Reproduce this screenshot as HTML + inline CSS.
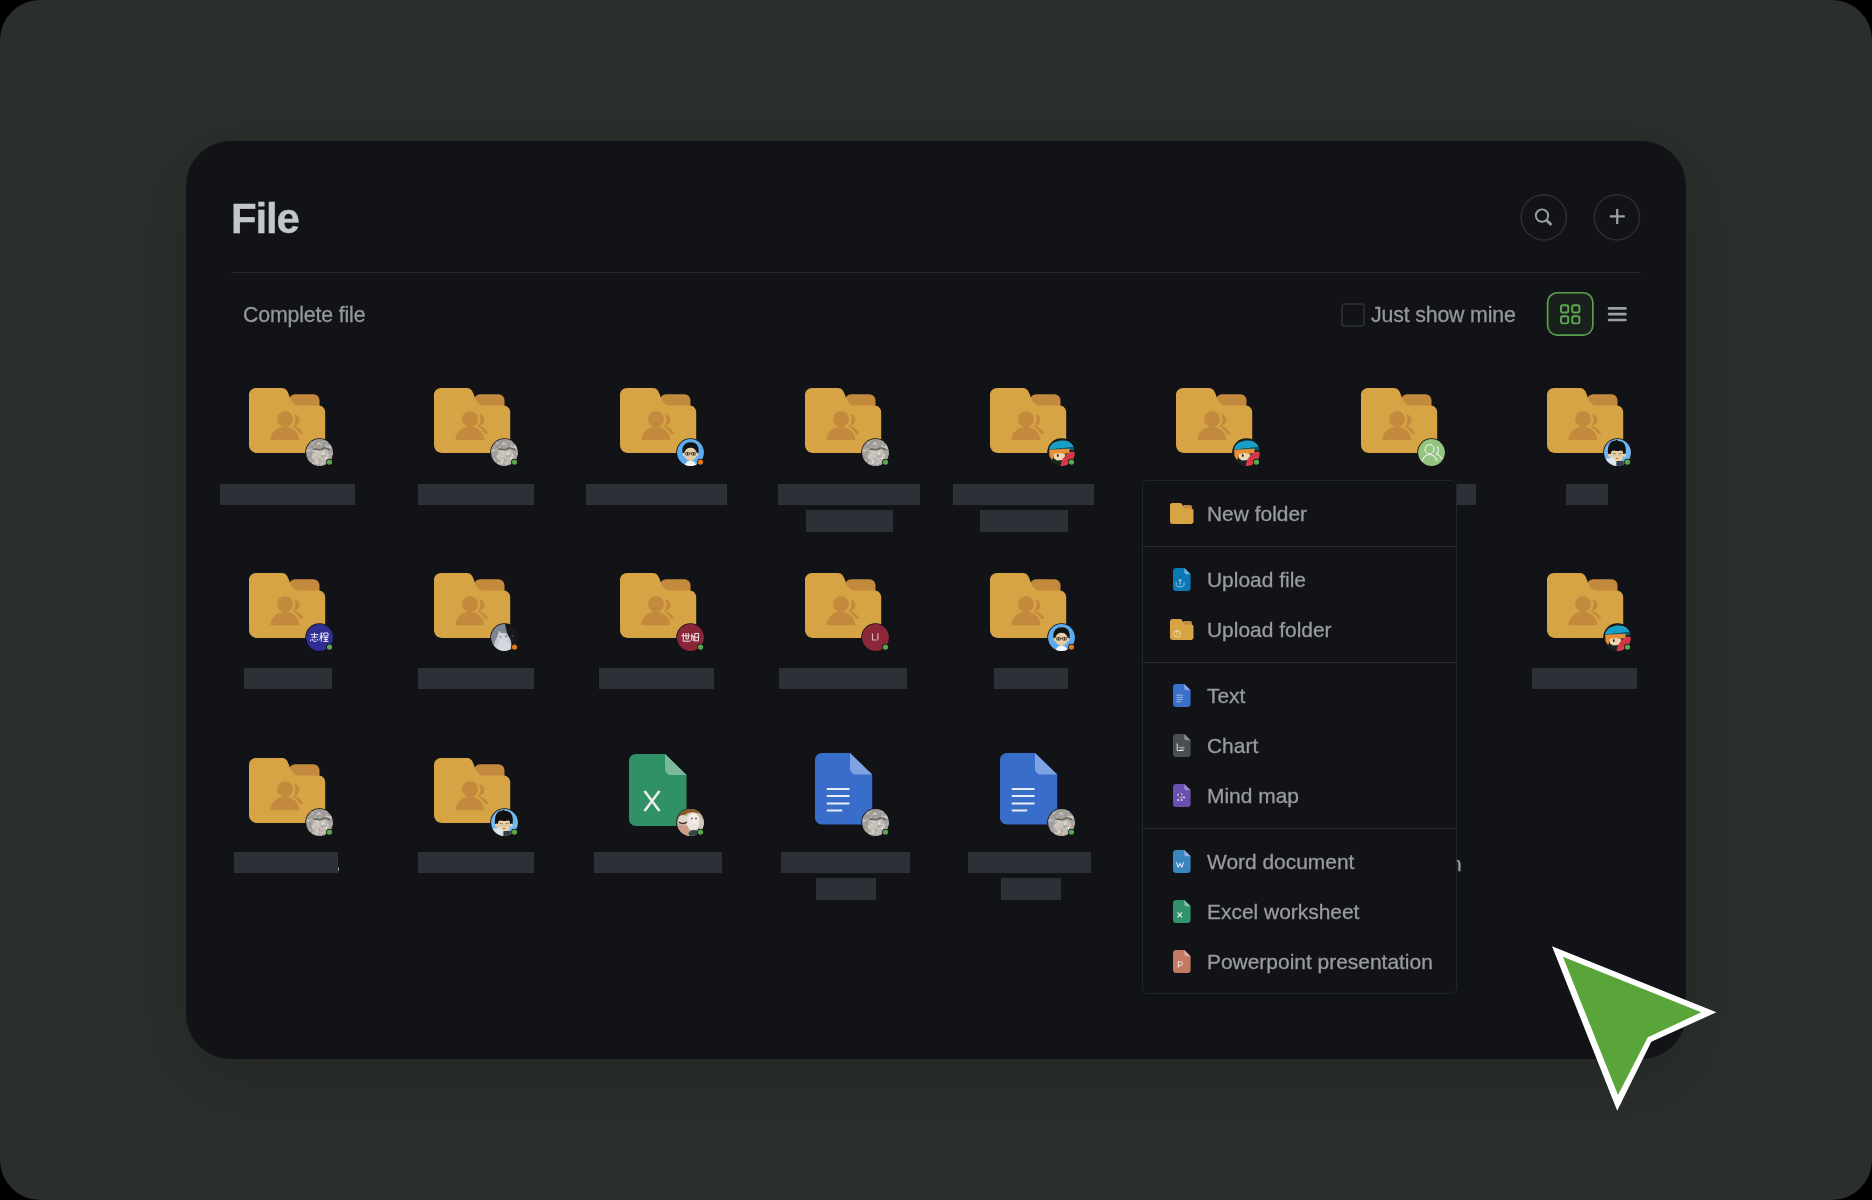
<!DOCTYPE html>
<html><head><meta charset="utf-8"><style>
html,body{margin:0;padding:0;background:#000;width:1872px;height:1200px;overflow:hidden}
body{position:relative;font-family:"Liberation Sans",sans-serif}
.ab{position:absolute}
.gs{will-change:transform;-webkit-text-stroke:0.3px currentColor}
.bar{height:21.5px;background:#2d3037}
.mt{font-size:20.95px;line-height:30px;color:#999ba2;white-space:nowrap}
</style></head><body>
<svg width="0" height="0" style="position:absolute"><defs>
<filter id="mbd" x="0" y="0" width="1" height="1"><feTurbulence type="turbulence" baseFrequency="0.2" numOctaves="2" seed="7"/><feColorMatrix type="matrix" values="0 0 0 0 0.35  0 0 0 0 0.35  0 0 0 0 0.36  2.6 0 0 0 -0.5"/></filter>
<filter id="mbl" x="0" y="0" width="1" height="1"><feTurbulence type="fractalNoise" baseFrequency="0.3" numOctaves="3" seed="2"/><feColorMatrix type="matrix" values="0 0 0 0 0.86  0 0 0 0 0.84  0 0 0 0 0.8  0 2.2 0 0 -1.0"/></filter>
<filter id="blur1"><feGaussianBlur stdDeviation="1.5"/></filter>
<filter id="blur05"><feGaussianBlur stdDeviation="0.5"/></filter>
</defs></svg>
<div class="ab" style="left:0;top:0;width:1872px;height:1200px;border-radius:40px;background:#2b2f2b"></div>
<div class="ab" style="left:186px;top:141px;width:1500px;height:918px;border-radius:45px;background:#121317;box-shadow:0 20px 70px rgba(0,0,0,0.17)"></div>
<div class="ab gs" style="left:231.2px;top:190.6px;font-size:42px;letter-spacing:-1.2px;font-weight:bold;color:#c4c6cd;line-height:56px">File</div>
<div class="ab" style="left:231px;top:271.5px;width:1410px;height:1px;background:#24262b"></div>
<svg class="ab" style="left:1514px;top:187px" width="60" height="60" viewBox="0 0 60 60"><circle cx="29.8" cy="30.3" r="22.6" stroke="#2c2e33" stroke-width="1.5" fill="none"/></svg>
<svg class="ab" style="left:1587px;top:187px" width="60" height="60" viewBox="0 0 60 60"><circle cx="30" cy="30.3" r="22.6" stroke="#2c2e33" stroke-width="1.5" fill="none"/></svg>
<svg class="ab" style="left:1530px;top:203px" width="28" height="28" viewBox="0 0 28 28"><circle cx="12" cy="12.6" r="6.2" stroke="#9c9fa6" stroke-width="1.9" fill="none"/><path d="M16.6 17.3 L21.4 22" stroke="#9c9fa6" stroke-width="2.6"/></svg>
<svg class="ab" style="left:1603px;top:203px" width="28" height="28" viewBox="0 0 28 28"><path d="M6.8 13.4 H21.8 M14.2 6 V21" stroke="#9c9fa6" stroke-width="2.2"/></svg>
<div class="ab gs" style="left:242.5px;top:299.9px;font-size:21.3px;letter-spacing:-0.15px;line-height:30px;color:#94979e;white-space:nowrap">Complete file</div>
<div class="ab" style="left:1341.3px;top:303px;width:19.5px;height:19.5px;border:2px solid #272a30;border-radius:3.5px"></div>
<div class="ab gs" style="left:1370.8px;top:299.9px;font-size:21.3px;letter-spacing:-0.15px;line-height:30px;color:#94979e;white-space:nowrap">Just show mine</div>
<svg class="ab" style="left:1540px;top:285px" width="60" height="60" viewBox="0 0 60 60"><rect x="7.65" y="7.75" width="45.2" height="42.3" rx="9.5" fill="#1a201c" stroke="#5aa04c" stroke-width="1.7"/></svg>
<svg class="ab" style="left:1556px;top:300px" width="30" height="30" viewBox="0 0 30 30"><g stroke="#5fa852" stroke-width="1.9" fill="none"><rect x="5" y="5.3" width="7.2" height="7.2" rx="1.8"/><rect x="16.2" y="5.3" width="7.2" height="7.2" rx="1.8"/><rect x="5" y="16.2" width="7.2" height="7.2" rx="1.8"/><rect x="16.2" y="16.2" width="7.2" height="7.2" rx="1.8"/></g></svg>
<svg class="ab" style="left:1604px;top:300px" width="26" height="26" viewBox="0 0 26 26"><path d="M5 8.4 H21.5 M5 14.1 H21.5 M5 20 H21.5" stroke="#9c9fa6" stroke-width="2.6" stroke-linecap="round"/></svg>
<svg class="ab" style="left:249.0px;top:388.0px" width="77" height="66" viewBox="0 0 77 66">
<rect x="40" y="6.3" width="30.5" height="20" rx="6" fill="#c38a3e"/>
<path d="M7 0 H33 C37 0 38.5 3 40 7 C41.5 12 44 17.6 50 17.6 H69.5 C73.3 17.6 76.2 20.5 76.2 24.3 V57 C76.2 61.4 72.6 65 68.2 65 H8 C3.6 65 0 61.4 0 57 V7 C0 3.1 3.1 0 7 0 Z" fill="#d6a444"/>
<clipPath id="fc1"><rect x="0" y="0" width="77" height="46"/></clipPath>
<circle cx="44.7" cy="31.8" r="5.8" fill="#c38a3e"/>
<ellipse cx="42.5" cy="53.5" rx="13.5" ry="16" fill="#c38a3e" clip-path="url(#fc1)"/>
<circle cx="36" cy="31.2" r="10.6" fill="#d6a444"/>
<path d="M19.4 52.2 A16.45 15.5 0 0 1 52.3 52.2 Z" fill="#d6a444"/>
<path d="M21.4 52.2 A14.45 13.5 0 0 1 50.3 52.2 Z" fill="#c38a3e"/>
<circle cx="36" cy="31.2" r="8" fill="#c38a3e"/>
</svg>
<svg class="ab" style="left:304.1px;top:436.7px" width="31" height="31" viewBox="-2 -2 31 31">
<circle cx="13.5" cy="13.5" r="14.3" fill="#121317"/>
<clipPath id="cmarble319452"><circle cx="13.5" cy="13.5" r="13.4"/></clipPath>
<g clip-path="url(#cmarble319452)"><rect width="27" height="27" fill="#9b9792"/><ellipse cx="15" cy="17.5" rx="9" ry="8" fill="#c7c0b5" filter="url(#blur1)"/><rect width="27" height="27" filter="url(#mbl)"/><rect width="27" height="27" filter="url(#mbd)"/><path d="M7 10.5 C10 9 13 12 16 10 C19 8 22 9.5 24 11" stroke="#55534f" stroke-width="1.6" fill="none" opacity="0.8" filter="url(#blur05)"/></g><circle cx="23.5" cy="23.1" r="3.4" fill="#121317"/><circle cx="23.5" cy="23.1" r="2.6" fill="#5aa84d"/>
</svg>
<svg class="ab" style="left:434.3px;top:388.0px" width="77" height="66" viewBox="0 0 77 66">
<rect x="40" y="6.3" width="30.5" height="20" rx="6" fill="#c38a3e"/>
<path d="M7 0 H33 C37 0 38.5 3 40 7 C41.5 12 44 17.6 50 17.6 H69.5 C73.3 17.6 76.2 20.5 76.2 24.3 V57 C76.2 61.4 72.6 65 68.2 65 H8 C3.6 65 0 61.4 0 57 V7 C0 3.1 3.1 0 7 0 Z" fill="#d6a444"/>
<clipPath id="fc2"><rect x="0" y="0" width="77" height="46"/></clipPath>
<circle cx="44.7" cy="31.8" r="5.8" fill="#c38a3e"/>
<ellipse cx="42.5" cy="53.5" rx="13.5" ry="16" fill="#c38a3e" clip-path="url(#fc2)"/>
<circle cx="36" cy="31.2" r="10.6" fill="#d6a444"/>
<path d="M19.4 52.2 A16.45 15.5 0 0 1 52.3 52.2 Z" fill="#d6a444"/>
<path d="M21.4 52.2 A14.45 13.5 0 0 1 50.3 52.2 Z" fill="#c38a3e"/>
<circle cx="36" cy="31.2" r="8" fill="#c38a3e"/>
</svg>
<svg class="ab" style="left:489.4px;top:436.7px" width="31" height="31" viewBox="-2 -2 31 31">
<circle cx="13.5" cy="13.5" r="14.3" fill="#121317"/>
<clipPath id="cmarble504452"><circle cx="13.5" cy="13.5" r="13.4"/></clipPath>
<g clip-path="url(#cmarble504452)"><rect width="27" height="27" fill="#9b9792"/><ellipse cx="15" cy="17.5" rx="9" ry="8" fill="#c7c0b5" filter="url(#blur1)"/><rect width="27" height="27" filter="url(#mbl)"/><rect width="27" height="27" filter="url(#mbd)"/><path d="M7 10.5 C10 9 13 12 16 10 C19 8 22 9.5 24 11" stroke="#55534f" stroke-width="1.6" fill="none" opacity="0.8" filter="url(#blur05)"/></g><circle cx="23.5" cy="23.1" r="3.4" fill="#121317"/><circle cx="23.5" cy="23.1" r="2.6" fill="#5aa84d"/>
</svg>
<svg class="ab" style="left:619.7px;top:388.0px" width="77" height="66" viewBox="0 0 77 66">
<rect x="40" y="6.3" width="30.5" height="20" rx="6" fill="#c38a3e"/>
<path d="M7 0 H33 C37 0 38.5 3 40 7 C41.5 12 44 17.6 50 17.6 H69.5 C73.3 17.6 76.2 20.5 76.2 24.3 V57 C76.2 61.4 72.6 65 68.2 65 H8 C3.6 65 0 61.4 0 57 V7 C0 3.1 3.1 0 7 0 Z" fill="#d6a444"/>
<clipPath id="fc3"><rect x="0" y="0" width="77" height="46"/></clipPath>
<circle cx="44.7" cy="31.8" r="5.8" fill="#c38a3e"/>
<ellipse cx="42.5" cy="53.5" rx="13.5" ry="16" fill="#c38a3e" clip-path="url(#fc3)"/>
<circle cx="36" cy="31.2" r="10.6" fill="#d6a444"/>
<path d="M19.4 52.2 A16.45 15.5 0 0 1 52.3 52.2 Z" fill="#d6a444"/>
<path d="M21.4 52.2 A14.45 13.5 0 0 1 50.3 52.2 Z" fill="#c38a3e"/>
<circle cx="36" cy="31.2" r="8" fill="#c38a3e"/>
</svg>
<svg class="ab" style="left:674.8px;top:436.7px" width="31" height="31" viewBox="-2 -2 31 31">
<circle cx="13.5" cy="13.5" r="14.3" fill="#121317"/>
<clipPath id="cguy690452"><circle cx="13.5" cy="13.5" r="13.4"/></clipPath>
<g clip-path="url(#cguy690452)"><rect width="27" height="27" fill="#5eacf0"/><path d="M5.5 14 C4.5 6 9 3 13.5 3.2 C18.5 3 22.5 6 21.5 14 Z" fill="#111214"/><ellipse cx="13.5" cy="15.2" rx="6.3" ry="6.6" fill="#e6cda8"/><path d="M7.2 12.5 C8 9 11 8.6 13.5 8.6 C16 8.6 19 9 19.8 12.5 L19.8 10 C18.5 7 15.5 6.5 13.5 6.5 C11.5 6.5 8.5 7 7.2 10 Z" fill="#111214"/><ellipse cx="6.9" cy="15.5" rx="1.2" ry="1.8" fill="#e6cda8"/><ellipse cx="20.1" cy="15.5" rx="1.2" ry="1.8" fill="#e6cda8"/><g stroke="#3a3028" stroke-width="0.8" fill="none"><rect x="8.5" y="13.5" width="4" height="2.6" rx="0.8"/><rect x="14.5" y="13.5" width="4" height="2.6" rx="0.8"/><path d="M12.5 14.3 H14.5"/></g><circle cx="10.5" cy="14.9" r="0.8" fill="#111"/><circle cx="16.5" cy="14.9" r="0.8" fill="#111"/><path d="M7.5 27 C8.5 23 11 21.8 13.5 21.8 C16 21.8 18.5 23 19.5 27 Z" fill="#f6f6f6"/></g><circle cx="23.5" cy="23.1" r="3.4" fill="#121317"/><circle cx="23.5" cy="23.1" r="2.6" fill="#e07a1f"/>
</svg>
<svg class="ab" style="left:805.1px;top:388.0px" width="77" height="66" viewBox="0 0 77 66">
<rect x="40" y="6.3" width="30.5" height="20" rx="6" fill="#c38a3e"/>
<path d="M7 0 H33 C37 0 38.5 3 40 7 C41.5 12 44 17.6 50 17.6 H69.5 C73.3 17.6 76.2 20.5 76.2 24.3 V57 C76.2 61.4 72.6 65 68.2 65 H8 C3.6 65 0 61.4 0 57 V7 C0 3.1 3.1 0 7 0 Z" fill="#d6a444"/>
<clipPath id="fc4"><rect x="0" y="0" width="77" height="46"/></clipPath>
<circle cx="44.7" cy="31.8" r="5.8" fill="#c38a3e"/>
<ellipse cx="42.5" cy="53.5" rx="13.5" ry="16" fill="#c38a3e" clip-path="url(#fc4)"/>
<circle cx="36" cy="31.2" r="10.6" fill="#d6a444"/>
<path d="M19.4 52.2 A16.45 15.5 0 0 1 52.3 52.2 Z" fill="#d6a444"/>
<path d="M21.4 52.2 A14.45 13.5 0 0 1 50.3 52.2 Z" fill="#c38a3e"/>
<circle cx="36" cy="31.2" r="8" fill="#c38a3e"/>
</svg>
<svg class="ab" style="left:860.2px;top:436.7px" width="31" height="31" viewBox="-2 -2 31 31">
<circle cx="13.5" cy="13.5" r="14.3" fill="#121317"/>
<clipPath id="cmarble875452"><circle cx="13.5" cy="13.5" r="13.4"/></clipPath>
<g clip-path="url(#cmarble875452)"><rect width="27" height="27" fill="#9b9792"/><ellipse cx="15" cy="17.5" rx="9" ry="8" fill="#c7c0b5" filter="url(#blur1)"/><rect width="27" height="27" filter="url(#mbl)"/><rect width="27" height="27" filter="url(#mbd)"/><path d="M7 10.5 C10 9 13 12 16 10 C19 8 22 9.5 24 11" stroke="#55534f" stroke-width="1.6" fill="none" opacity="0.8" filter="url(#blur05)"/></g><circle cx="23.5" cy="23.1" r="3.4" fill="#121317"/><circle cx="23.5" cy="23.1" r="2.6" fill="#5aa84d"/>
</svg>
<svg class="ab" style="left:990.4px;top:388.0px" width="77" height="66" viewBox="0 0 77 66">
<rect x="40" y="6.3" width="30.5" height="20" rx="6" fill="#c38a3e"/>
<path d="M7 0 H33 C37 0 38.5 3 40 7 C41.5 12 44 17.6 50 17.6 H69.5 C73.3 17.6 76.2 20.5 76.2 24.3 V57 C76.2 61.4 72.6 65 68.2 65 H8 C3.6 65 0 61.4 0 57 V7 C0 3.1 3.1 0 7 0 Z" fill="#d6a444"/>
<clipPath id="fc5"><rect x="0" y="0" width="77" height="46"/></clipPath>
<circle cx="44.7" cy="31.8" r="5.8" fill="#c38a3e"/>
<ellipse cx="42.5" cy="53.5" rx="13.5" ry="16" fill="#c38a3e" clip-path="url(#fc5)"/>
<circle cx="36" cy="31.2" r="10.6" fill="#d6a444"/>
<path d="M19.4 52.2 A16.45 15.5 0 0 1 52.3 52.2 Z" fill="#d6a444"/>
<path d="M21.4 52.2 A14.45 13.5 0 0 1 50.3 52.2 Z" fill="#c38a3e"/>
<circle cx="36" cy="31.2" r="8" fill="#c38a3e"/>
</svg>
<svg class="ab" style="left:1045.5px;top:436.7px" width="31" height="31" viewBox="-2 -2 31 31">
<circle cx="13.5" cy="13.5" r="14.3" fill="#121317"/>
<clipPath id="canime1061452"><circle cx="13.5" cy="13.5" r="13.4"/></clipPath>
<g clip-path="url(#canime1061452)"><rect width="27" height="27" fill="#18241f"/><path d="M1 10.5 C2 4 9 1.5 15 1.5 C21 1.5 25 5 26 8 L21 8.5 Z" fill="#199fc7"/><path d="M1 10.5 L21 8.5 L26 8 C26.5 9 26.5 10 26.5 11 L1.5 11.5 Z" fill="#0f5e70"/><path d="M1.2 10.8 L21.5 9.8 L21.5 14 L15 15 L12 19 L6 17.5 L4 21 L1.5 17 Z" fill="#e68e38"/><path d="M5.8 15 L12.5 14 L17.6 15.5 L15.5 21 L9 21.5 L6 19.5 Z" fill="#edd6b1"/><ellipse cx="9.8" cy="16.5" rx="0.9" ry="1.5" fill="#2a2018"/><path d="M12.5 27 L14.5 20 L20.5 13.8 L24.5 12.5 L27 14 L27 27 Z" fill="#dc3b4c"/><path d="M17 19.5 L25 15 M15.5 23 L26 18" stroke="#a82838" stroke-width="0.7"/></g><circle cx="23.5" cy="23.1" r="3.4" fill="#121317"/><circle cx="23.5" cy="23.1" r="2.6" fill="#5aa84d"/>
</svg>
<svg class="ab" style="left:1175.8px;top:388.0px" width="77" height="66" viewBox="0 0 77 66">
<rect x="40" y="6.3" width="30.5" height="20" rx="6" fill="#c38a3e"/>
<path d="M7 0 H33 C37 0 38.5 3 40 7 C41.5 12 44 17.6 50 17.6 H69.5 C73.3 17.6 76.2 20.5 76.2 24.3 V57 C76.2 61.4 72.6 65 68.2 65 H8 C3.6 65 0 61.4 0 57 V7 C0 3.1 3.1 0 7 0 Z" fill="#d6a444"/>
<clipPath id="fc6"><rect x="0" y="0" width="77" height="46"/></clipPath>
<circle cx="44.7" cy="31.8" r="5.8" fill="#c38a3e"/>
<ellipse cx="42.5" cy="53.5" rx="13.5" ry="16" fill="#c38a3e" clip-path="url(#fc6)"/>
<circle cx="36" cy="31.2" r="10.6" fill="#d6a444"/>
<path d="M19.4 52.2 A16.45 15.5 0 0 1 52.3 52.2 Z" fill="#d6a444"/>
<path d="M21.4 52.2 A14.45 13.5 0 0 1 50.3 52.2 Z" fill="#c38a3e"/>
<circle cx="36" cy="31.2" r="8" fill="#c38a3e"/>
</svg>
<svg class="ab" style="left:1230.9px;top:436.7px" width="31" height="31" viewBox="-2 -2 31 31">
<circle cx="13.5" cy="13.5" r="14.3" fill="#121317"/>
<clipPath id="canime1246452"><circle cx="13.5" cy="13.5" r="13.4"/></clipPath>
<g clip-path="url(#canime1246452)"><rect width="27" height="27" fill="#18241f"/><path d="M1 10.5 C2 4 9 1.5 15 1.5 C21 1.5 25 5 26 8 L21 8.5 Z" fill="#199fc7"/><path d="M1 10.5 L21 8.5 L26 8 C26.5 9 26.5 10 26.5 11 L1.5 11.5 Z" fill="#0f5e70"/><path d="M1.2 10.8 L21.5 9.8 L21.5 14 L15 15 L12 19 L6 17.5 L4 21 L1.5 17 Z" fill="#e68e38"/><path d="M5.8 15 L12.5 14 L17.6 15.5 L15.5 21 L9 21.5 L6 19.5 Z" fill="#edd6b1"/><ellipse cx="9.8" cy="16.5" rx="0.9" ry="1.5" fill="#2a2018"/><path d="M12.5 27 L14.5 20 L20.5 13.8 L24.5 12.5 L27 14 L27 27 Z" fill="#dc3b4c"/><path d="M17 19.5 L25 15 M15.5 23 L26 18" stroke="#a82838" stroke-width="0.7"/></g><circle cx="23.5" cy="23.1" r="3.4" fill="#121317"/><circle cx="23.5" cy="23.1" r="2.6" fill="#5aa84d"/>
</svg>
<svg class="ab" style="left:1361.2px;top:388.0px" width="77" height="66" viewBox="0 0 77 66">
<rect x="40" y="6.3" width="30.5" height="20" rx="6" fill="#c38a3e"/>
<path d="M7 0 H33 C37 0 38.5 3 40 7 C41.5 12 44 17.6 50 17.6 H69.5 C73.3 17.6 76.2 20.5 76.2 24.3 V57 C76.2 61.4 72.6 65 68.2 65 H8 C3.6 65 0 61.4 0 57 V7 C0 3.1 3.1 0 7 0 Z" fill="#d6a444"/>
<clipPath id="fc7"><rect x="0" y="0" width="77" height="46"/></clipPath>
<circle cx="44.7" cy="31.8" r="5.8" fill="#c38a3e"/>
<ellipse cx="42.5" cy="53.5" rx="13.5" ry="16" fill="#c38a3e" clip-path="url(#fc7)"/>
<circle cx="36" cy="31.2" r="10.6" fill="#d6a444"/>
<path d="M19.4 52.2 A16.45 15.5 0 0 1 52.3 52.2 Z" fill="#d6a444"/>
<path d="M21.4 52.2 A14.45 13.5 0 0 1 50.3 52.2 Z" fill="#c38a3e"/>
<circle cx="36" cy="31.2" r="8" fill="#c38a3e"/>
</svg>
<svg class="ab" style="left:1416.3px;top:436.7px" width="31" height="31" viewBox="-2 -2 31 31">
<circle cx="13.5" cy="13.5" r="14.3" fill="#121317"/>
<clipPath id="cgroup1431452"><circle cx="13.5" cy="13.5" r="13.4"/></clipPath>
<g clip-path="url(#cgroup1431452)"><rect width="27" height="27" fill="#94c47e"/><circle cx="11.5" cy="10.3" r="4.5" fill="none" stroke="#f2f2f2" stroke-width="1.1"/><path d="M4.2 22.2 C5.5 17.5 8.5 15.5 11.5 15.5 C14.5 15.5 17.5 17.5 19 22.2" fill="none" stroke="#f2f2f2" stroke-width="1.1"/><path d="M18.8 7.5 C21.3 9.5 21 13.3 18.3 14.8 C20.5 15.6 22.6 17.3 23.6 19.8" fill="none" stroke="#f2f2f2" stroke-width="1.1"/></g>
</svg>
<svg class="ab" style="left:1546.5px;top:388.0px" width="77" height="66" viewBox="0 0 77 66">
<rect x="40" y="6.3" width="30.5" height="20" rx="6" fill="#c38a3e"/>
<path d="M7 0 H33 C37 0 38.5 3 40 7 C41.5 12 44 17.6 50 17.6 H69.5 C73.3 17.6 76.2 20.5 76.2 24.3 V57 C76.2 61.4 72.6 65 68.2 65 H8 C3.6 65 0 61.4 0 57 V7 C0 3.1 3.1 0 7 0 Z" fill="#d6a444"/>
<clipPath id="fc8"><rect x="0" y="0" width="77" height="46"/></clipPath>
<circle cx="44.7" cy="31.8" r="5.8" fill="#c38a3e"/>
<ellipse cx="42.5" cy="53.5" rx="13.5" ry="16" fill="#c38a3e" clip-path="url(#fc8)"/>
<circle cx="36" cy="31.2" r="10.6" fill="#d6a444"/>
<path d="M19.4 52.2 A16.45 15.5 0 0 1 52.3 52.2 Z" fill="#d6a444"/>
<path d="M21.4 52.2 A14.45 13.5 0 0 1 50.3 52.2 Z" fill="#c38a3e"/>
<circle cx="36" cy="31.2" r="8" fill="#c38a3e"/>
</svg>
<svg class="ab" style="left:1601.6px;top:436.7px" width="31" height="31" viewBox="-2 -2 31 31">
<circle cx="13.5" cy="13.5" r="14.3" fill="#121317"/>
<clipPath id="cguy21617452"><circle cx="13.5" cy="13.5" r="13.4"/></clipPath>
<g clip-path="url(#cguy21617452)"><rect width="27" height="27" fill="#72b8ef"/><path d="M4 15 C3 4 8 1.5 11 1.8 L13 0.5 L14 2 C19.5 2 23 5.5 21.5 15 Z" fill="#0f1012"/><path d="M6.5 20 C6.5 15 7 12 9 11.6 C11 12.2 16 12.2 18 11.6 C19.5 12.5 19 16 18.5 20 C17.5 22.5 15 23 13 23 C10 23 7 22 6.5 20 Z" fill="#ecd1a7"/><ellipse cx="5.5" cy="16.2" rx="1.3" ry="1.8" fill="#ecd1a7"/><ellipse cx="20.3" cy="16.2" rx="1.3" ry="1.8" fill="#ecd1a7"/><path d="M8.5 14.6 H12 M14.5 14.6 H18" stroke="#8c7e6c" stroke-width="1"/><path d="M8 16.6 H18" stroke="#c9b090" stroke-width="0.6"/><path d="M11.5 19.4 H14.5" stroke="#5a4a3a" stroke-width="0.6"/><path d="M0 20 L11 18.5 L12.5 27 L0 27 Z" fill="#dfe4e7"/><path d="M12.5 22 L19.5 22 L20 27 L12.5 27 Z" fill="#3a3d41"/></g><circle cx="23.5" cy="23.1" r="3.4" fill="#121317"/><circle cx="23.5" cy="23.1" r="2.6" fill="#5aa84d"/>
</svg>
<svg class="ab" style="left:249.0px;top:572.9px" width="77" height="66" viewBox="0 0 77 66">
<rect x="40" y="6.3" width="30.5" height="20" rx="6" fill="#c38a3e"/>
<path d="M7 0 H33 C37 0 38.5 3 40 7 C41.5 12 44 17.6 50 17.6 H69.5 C73.3 17.6 76.2 20.5 76.2 24.3 V57 C76.2 61.4 72.6 65 68.2 65 H8 C3.6 65 0 61.4 0 57 V7 C0 3.1 3.1 0 7 0 Z" fill="#d6a444"/>
<clipPath id="fc9"><rect x="0" y="0" width="77" height="46"/></clipPath>
<circle cx="44.7" cy="31.8" r="5.8" fill="#c38a3e"/>
<ellipse cx="42.5" cy="53.5" rx="13.5" ry="16" fill="#c38a3e" clip-path="url(#fc9)"/>
<circle cx="36" cy="31.2" r="10.6" fill="#d6a444"/>
<path d="M19.4 52.2 A16.45 15.5 0 0 1 52.3 52.2 Z" fill="#d6a444"/>
<path d="M21.4 52.2 A14.45 13.5 0 0 1 50.3 52.2 Z" fill="#c38a3e"/>
<circle cx="36" cy="31.2" r="8" fill="#c38a3e"/>
</svg>
<svg class="ab" style="left:304.1px;top:621.6px" width="31" height="31" viewBox="-2 -2 31 31">
<circle cx="13.5" cy="13.5" r="14.3" fill="#121317"/>
<clipPath id="czc319637"><circle cx="13.5" cy="13.5" r="13.4"/></clipPath>
<g clip-path="url(#czc319637)"><rect width="27" height="27" fill="#302d95"/><g stroke="#ecebf8" stroke-width="1" fill="none"><path d="M4.5 10.6 H12.5 M8.5 8.7 V13.6 M5.5 13.2 H11.5 M5 15.3 L4.5 17.3 M6.6 14.8 C6.6 16.5 6.8 17.3 8.5 17.3 H10.5 M8.5 14.8 L9.2 15.8 M11.3 15 L12.3 16.7"/><path d="M14.2 9.5 L16.6 8.9 M13.6 12 H17 M15.3 9 V17.6 M15.2 12.5 L13.6 15.5 M15.5 12.8 L16.8 14.3 M17.8 9 H22 V12 H17.8 Z M17.5 13.6 H22.3 M19.9 13.6 V17.4 M18 15.5 H21.8 M17.3 17.4 H22.5"/></g></g><circle cx="23.5" cy="23.1" r="3.4" fill="#121317"/><circle cx="23.5" cy="23.1" r="2.6" fill="#5aa84d"/>
</svg>
<svg class="ab" style="left:434.3px;top:572.9px" width="77" height="66" viewBox="0 0 77 66">
<rect x="40" y="6.3" width="30.5" height="20" rx="6" fill="#c38a3e"/>
<path d="M7 0 H33 C37 0 38.5 3 40 7 C41.5 12 44 17.6 50 17.6 H69.5 C73.3 17.6 76.2 20.5 76.2 24.3 V57 C76.2 61.4 72.6 65 68.2 65 H8 C3.6 65 0 61.4 0 57 V7 C0 3.1 3.1 0 7 0 Z" fill="#d6a444"/>
<clipPath id="fc10"><rect x="0" y="0" width="77" height="46"/></clipPath>
<circle cx="44.7" cy="31.8" r="5.8" fill="#c38a3e"/>
<ellipse cx="42.5" cy="53.5" rx="13.5" ry="16" fill="#c38a3e" clip-path="url(#fc10)"/>
<circle cx="36" cy="31.2" r="10.6" fill="#d6a444"/>
<path d="M19.4 52.2 A16.45 15.5 0 0 1 52.3 52.2 Z" fill="#d6a444"/>
<path d="M21.4 52.2 A14.45 13.5 0 0 1 50.3 52.2 Z" fill="#c38a3e"/>
<circle cx="36" cy="31.2" r="8" fill="#c38a3e"/>
</svg>
<svg class="ab" style="left:489.4px;top:621.6px" width="31" height="31" viewBox="-2 -2 31 31">
<circle cx="13.5" cy="13.5" r="14.3" fill="#121317"/>
<clipPath id="ccat504637"><circle cx="13.5" cy="13.5" r="13.4"/></clipPath>
<g clip-path="url(#ccat504637)"><rect width="27" height="27" fill="#16181b"/><path d="M0 0 H14 C15 5 16 9 17 11 L17 27 H0 Z" fill="#7d8792"/><path d="M3 27 C2 21 4 16 6.5 12.5 L8 6.5 L11 9.5 C14 9.5 17.5 11 19 14.5 C20.5 18 21 23 20.5 27 Z" fill="#c3c7cf"/><ellipse cx="12" cy="13.5" rx="5.5" ry="4.5" fill="#cfd3da"/><ellipse cx="13" cy="22" rx="7" ry="5" fill="#d4d7dd"/><circle cx="15.2" cy="12.3" r="1" fill="#66717c"/><circle cx="9.5" cy="12.8" r="0.9" fill="#8a8a70"/><circle cx="21.5" cy="12" r="1.4" fill="#33363a"/><circle cx="22.5" cy="16.5" r="1" fill="#2c2f33"/></g><circle cx="23.5" cy="23.1" r="3.4" fill="#121317"/><circle cx="23.5" cy="23.1" r="2.6" fill="#e07a1f"/>
</svg>
<svg class="ab" style="left:619.7px;top:572.9px" width="77" height="66" viewBox="0 0 77 66">
<rect x="40" y="6.3" width="30.5" height="20" rx="6" fill="#c38a3e"/>
<path d="M7 0 H33 C37 0 38.5 3 40 7 C41.5 12 44 17.6 50 17.6 H69.5 C73.3 17.6 76.2 20.5 76.2 24.3 V57 C76.2 61.4 72.6 65 68.2 65 H8 C3.6 65 0 61.4 0 57 V7 C0 3.1 3.1 0 7 0 Z" fill="#d6a444"/>
<clipPath id="fc11"><rect x="0" y="0" width="77" height="46"/></clipPath>
<circle cx="44.7" cy="31.8" r="5.8" fill="#c38a3e"/>
<ellipse cx="42.5" cy="53.5" rx="13.5" ry="16" fill="#c38a3e" clip-path="url(#fc11)"/>
<circle cx="36" cy="31.2" r="10.6" fill="#d6a444"/>
<path d="M19.4 52.2 A16.45 15.5 0 0 1 52.3 52.2 Z" fill="#d6a444"/>
<path d="M21.4 52.2 A14.45 13.5 0 0 1 50.3 52.2 Z" fill="#c38a3e"/>
<circle cx="36" cy="31.2" r="8" fill="#c38a3e"/>
</svg>
<svg class="ab" style="left:674.8px;top:621.6px" width="31" height="31" viewBox="-2 -2 31 31">
<circle cx="13.5" cy="13.5" r="14.3" fill="#121317"/>
<clipPath id="csx690637"><circle cx="13.5" cy="13.5" r="13.4"/></clipPath>
<g clip-path="url(#csx690637)"><rect width="27" height="27" fill="#8a2639"/><g stroke="#f2e6e9" stroke-width="1" fill="none"><path d="M4.3 11.8 H12.8 M6.3 9 V17.2 M9 9 V15 M11.3 9 V15 M9 15 H11.3 M6.3 17.2 H12.8"/><path d="M13.5 12 H16.3 M15 9.5 C15 13 14.8 15.5 13.5 17.3 M16.3 12 V16.8 L17.5 17.1 M17.8 9.5 H21.5 V16.8 H17.8 Z M17.8 13.2 H21.5"/></g></g><circle cx="23.5" cy="23.1" r="3.4" fill="#121317"/><circle cx="23.5" cy="23.1" r="2.6" fill="#5aa84d"/>
</svg>
<svg class="ab" style="left:805.1px;top:572.9px" width="77" height="66" viewBox="0 0 77 66">
<rect x="40" y="6.3" width="30.5" height="20" rx="6" fill="#c38a3e"/>
<path d="M7 0 H33 C37 0 38.5 3 40 7 C41.5 12 44 17.6 50 17.6 H69.5 C73.3 17.6 76.2 20.5 76.2 24.3 V57 C76.2 61.4 72.6 65 68.2 65 H8 C3.6 65 0 61.4 0 57 V7 C0 3.1 3.1 0 7 0 Z" fill="#d6a444"/>
<clipPath id="fc12"><rect x="0" y="0" width="77" height="46"/></clipPath>
<circle cx="44.7" cy="31.8" r="5.8" fill="#c38a3e"/>
<ellipse cx="42.5" cy="53.5" rx="13.5" ry="16" fill="#c38a3e" clip-path="url(#fc12)"/>
<circle cx="36" cy="31.2" r="10.6" fill="#d6a444"/>
<path d="M19.4 52.2 A16.45 15.5 0 0 1 52.3 52.2 Z" fill="#d6a444"/>
<path d="M21.4 52.2 A14.45 13.5 0 0 1 50.3 52.2 Z" fill="#c38a3e"/>
<circle cx="36" cy="31.2" r="8" fill="#c38a3e"/>
</svg>
<svg class="ab" style="left:860.2px;top:621.6px" width="31" height="31" viewBox="-2 -2 31 31">
<circle cx="13.5" cy="13.5" r="14.3" fill="#121317"/>
<clipPath id="cli875637"><circle cx="13.5" cy="13.5" r="13.4"/></clipPath>
<g clip-path="url(#cli875637)"><rect width="27" height="27" fill="#8b2739"/><g stroke="#e3c9cf" stroke-width="1" fill="none"><path d="M10.4 9.4 V16 H14.3 M15.9 9.4 V16.4"/></g></g><circle cx="23.5" cy="23.1" r="3.4" fill="#121317"/><circle cx="23.5" cy="23.1" r="2.6" fill="#5aa84d"/>
</svg>
<svg class="ab" style="left:990.4px;top:572.9px" width="77" height="66" viewBox="0 0 77 66">
<rect x="40" y="6.3" width="30.5" height="20" rx="6" fill="#c38a3e"/>
<path d="M7 0 H33 C37 0 38.5 3 40 7 C41.5 12 44 17.6 50 17.6 H69.5 C73.3 17.6 76.2 20.5 76.2 24.3 V57 C76.2 61.4 72.6 65 68.2 65 H8 C3.6 65 0 61.4 0 57 V7 C0 3.1 3.1 0 7 0 Z" fill="#d6a444"/>
<clipPath id="fc13"><rect x="0" y="0" width="77" height="46"/></clipPath>
<circle cx="44.7" cy="31.8" r="5.8" fill="#c38a3e"/>
<ellipse cx="42.5" cy="53.5" rx="13.5" ry="16" fill="#c38a3e" clip-path="url(#fc13)"/>
<circle cx="36" cy="31.2" r="10.6" fill="#d6a444"/>
<path d="M19.4 52.2 A16.45 15.5 0 0 1 52.3 52.2 Z" fill="#d6a444"/>
<path d="M21.4 52.2 A14.45 13.5 0 0 1 50.3 52.2 Z" fill="#c38a3e"/>
<circle cx="36" cy="31.2" r="8" fill="#c38a3e"/>
</svg>
<svg class="ab" style="left:1045.5px;top:621.6px" width="31" height="31" viewBox="-2 -2 31 31">
<circle cx="13.5" cy="13.5" r="14.3" fill="#121317"/>
<clipPath id="cguy1061637"><circle cx="13.5" cy="13.5" r="13.4"/></clipPath>
<g clip-path="url(#cguy1061637)"><rect width="27" height="27" fill="#5eacf0"/><path d="M5.5 14 C4.5 6 9 3 13.5 3.2 C18.5 3 22.5 6 21.5 14 Z" fill="#111214"/><ellipse cx="13.5" cy="15.2" rx="6.3" ry="6.6" fill="#e6cda8"/><path d="M7.2 12.5 C8 9 11 8.6 13.5 8.6 C16 8.6 19 9 19.8 12.5 L19.8 10 C18.5 7 15.5 6.5 13.5 6.5 C11.5 6.5 8.5 7 7.2 10 Z" fill="#111214"/><ellipse cx="6.9" cy="15.5" rx="1.2" ry="1.8" fill="#e6cda8"/><ellipse cx="20.1" cy="15.5" rx="1.2" ry="1.8" fill="#e6cda8"/><g stroke="#3a3028" stroke-width="0.8" fill="none"><rect x="8.5" y="13.5" width="4" height="2.6" rx="0.8"/><rect x="14.5" y="13.5" width="4" height="2.6" rx="0.8"/><path d="M12.5 14.3 H14.5"/></g><circle cx="10.5" cy="14.9" r="0.8" fill="#111"/><circle cx="16.5" cy="14.9" r="0.8" fill="#111"/><path d="M7.5 27 C8.5 23 11 21.8 13.5 21.8 C16 21.8 18.5 23 19.5 27 Z" fill="#f6f6f6"/></g><circle cx="23.5" cy="23.1" r="3.4" fill="#121317"/><circle cx="23.5" cy="23.1" r="2.6" fill="#e07a1f"/>
</svg>
<svg class="ab" style="left:1546.5px;top:572.9px" width="77" height="66" viewBox="0 0 77 66">
<rect x="40" y="6.3" width="30.5" height="20" rx="6" fill="#c38a3e"/>
<path d="M7 0 H33 C37 0 38.5 3 40 7 C41.5 12 44 17.6 50 17.6 H69.5 C73.3 17.6 76.2 20.5 76.2 24.3 V57 C76.2 61.4 72.6 65 68.2 65 H8 C3.6 65 0 61.4 0 57 V7 C0 3.1 3.1 0 7 0 Z" fill="#d6a444"/>
<clipPath id="fc14"><rect x="0" y="0" width="77" height="46"/></clipPath>
<circle cx="44.7" cy="31.8" r="5.8" fill="#c38a3e"/>
<ellipse cx="42.5" cy="53.5" rx="13.5" ry="16" fill="#c38a3e" clip-path="url(#fc14)"/>
<circle cx="36" cy="31.2" r="10.6" fill="#d6a444"/>
<path d="M19.4 52.2 A16.45 15.5 0 0 1 52.3 52.2 Z" fill="#d6a444"/>
<path d="M21.4 52.2 A14.45 13.5 0 0 1 50.3 52.2 Z" fill="#c38a3e"/>
<circle cx="36" cy="31.2" r="8" fill="#c38a3e"/>
</svg>
<svg class="ab" style="left:1601.6px;top:621.6px" width="31" height="31" viewBox="-2 -2 31 31">
<circle cx="13.5" cy="13.5" r="14.3" fill="#121317"/>
<clipPath id="canime1617637"><circle cx="13.5" cy="13.5" r="13.4"/></clipPath>
<g clip-path="url(#canime1617637)"><rect width="27" height="27" fill="#18241f"/><path d="M1 10.5 C2 4 9 1.5 15 1.5 C21 1.5 25 5 26 8 L21 8.5 Z" fill="#199fc7"/><path d="M1 10.5 L21 8.5 L26 8 C26.5 9 26.5 10 26.5 11 L1.5 11.5 Z" fill="#0f5e70"/><path d="M1.2 10.8 L21.5 9.8 L21.5 14 L15 15 L12 19 L6 17.5 L4 21 L1.5 17 Z" fill="#e68e38"/><path d="M5.8 15 L12.5 14 L17.6 15.5 L15.5 21 L9 21.5 L6 19.5 Z" fill="#edd6b1"/><ellipse cx="9.8" cy="16.5" rx="0.9" ry="1.5" fill="#2a2018"/><path d="M12.5 27 L14.5 20 L20.5 13.8 L24.5 12.5 L27 14 L27 27 Z" fill="#dc3b4c"/><path d="M17 19.5 L25 15 M15.5 23 L26 18" stroke="#a82838" stroke-width="0.7"/></g><circle cx="23.5" cy="23.1" r="3.4" fill="#121317"/><circle cx="23.5" cy="23.1" r="2.6" fill="#5aa84d"/>
</svg>
<svg class="ab" style="left:249.0px;top:757.8px" width="77" height="66" viewBox="0 0 77 66">
<rect x="40" y="6.3" width="30.5" height="20" rx="6" fill="#c38a3e"/>
<path d="M7 0 H33 C37 0 38.5 3 40 7 C41.5 12 44 17.6 50 17.6 H69.5 C73.3 17.6 76.2 20.5 76.2 24.3 V57 C76.2 61.4 72.6 65 68.2 65 H8 C3.6 65 0 61.4 0 57 V7 C0 3.1 3.1 0 7 0 Z" fill="#d6a444"/>
<clipPath id="fc15"><rect x="0" y="0" width="77" height="46"/></clipPath>
<circle cx="44.7" cy="31.8" r="5.8" fill="#c38a3e"/>
<ellipse cx="42.5" cy="53.5" rx="13.5" ry="16" fill="#c38a3e" clip-path="url(#fc15)"/>
<circle cx="36" cy="31.2" r="10.6" fill="#d6a444"/>
<path d="M19.4 52.2 A16.45 15.5 0 0 1 52.3 52.2 Z" fill="#d6a444"/>
<path d="M21.4 52.2 A14.45 13.5 0 0 1 50.3 52.2 Z" fill="#c38a3e"/>
<circle cx="36" cy="31.2" r="8" fill="#c38a3e"/>
</svg>
<svg class="ab" style="left:304.1px;top:806.5px" width="31" height="31" viewBox="-2 -2 31 31">
<circle cx="13.5" cy="13.5" r="14.3" fill="#121317"/>
<clipPath id="cmarble319822"><circle cx="13.5" cy="13.5" r="13.4"/></clipPath>
<g clip-path="url(#cmarble319822)"><rect width="27" height="27" fill="#9b9792"/><ellipse cx="15" cy="17.5" rx="9" ry="8" fill="#c7c0b5" filter="url(#blur1)"/><rect width="27" height="27" filter="url(#mbl)"/><rect width="27" height="27" filter="url(#mbd)"/><path d="M7 10.5 C10 9 13 12 16 10 C19 8 22 9.5 24 11" stroke="#55534f" stroke-width="1.6" fill="none" opacity="0.8" filter="url(#blur05)"/></g><circle cx="23.5" cy="23.1" r="3.4" fill="#121317"/><circle cx="23.5" cy="23.1" r="2.6" fill="#5aa84d"/>
</svg>
<svg class="ab" style="left:434.3px;top:757.8px" width="77" height="66" viewBox="0 0 77 66">
<rect x="40" y="6.3" width="30.5" height="20" rx="6" fill="#c38a3e"/>
<path d="M7 0 H33 C37 0 38.5 3 40 7 C41.5 12 44 17.6 50 17.6 H69.5 C73.3 17.6 76.2 20.5 76.2 24.3 V57 C76.2 61.4 72.6 65 68.2 65 H8 C3.6 65 0 61.4 0 57 V7 C0 3.1 3.1 0 7 0 Z" fill="#d6a444"/>
<clipPath id="fc16"><rect x="0" y="0" width="77" height="46"/></clipPath>
<circle cx="44.7" cy="31.8" r="5.8" fill="#c38a3e"/>
<ellipse cx="42.5" cy="53.5" rx="13.5" ry="16" fill="#c38a3e" clip-path="url(#fc16)"/>
<circle cx="36" cy="31.2" r="10.6" fill="#d6a444"/>
<path d="M19.4 52.2 A16.45 15.5 0 0 1 52.3 52.2 Z" fill="#d6a444"/>
<path d="M21.4 52.2 A14.45 13.5 0 0 1 50.3 52.2 Z" fill="#c38a3e"/>
<circle cx="36" cy="31.2" r="8" fill="#c38a3e"/>
</svg>
<svg class="ab" style="left:489.4px;top:806.5px" width="31" height="31" viewBox="-2 -2 31 31">
<circle cx="13.5" cy="13.5" r="14.3" fill="#121317"/>
<clipPath id="cguy2504822"><circle cx="13.5" cy="13.5" r="13.4"/></clipPath>
<g clip-path="url(#cguy2504822)"><rect width="27" height="27" fill="#72b8ef"/><path d="M4 15 C3 4 8 1.5 11 1.8 L13 0.5 L14 2 C19.5 2 23 5.5 21.5 15 Z" fill="#0f1012"/><path d="M6.5 20 C6.5 15 7 12 9 11.6 C11 12.2 16 12.2 18 11.6 C19.5 12.5 19 16 18.5 20 C17.5 22.5 15 23 13 23 C10 23 7 22 6.5 20 Z" fill="#ecd1a7"/><ellipse cx="5.5" cy="16.2" rx="1.3" ry="1.8" fill="#ecd1a7"/><ellipse cx="20.3" cy="16.2" rx="1.3" ry="1.8" fill="#ecd1a7"/><path d="M8.5 14.6 H12 M14.5 14.6 H18" stroke="#8c7e6c" stroke-width="1"/><path d="M8 16.6 H18" stroke="#c9b090" stroke-width="0.6"/><path d="M11.5 19.4 H14.5" stroke="#5a4a3a" stroke-width="0.6"/><path d="M0 20 L11 18.5 L12.5 27 L0 27 Z" fill="#dfe4e7"/><path d="M12.5 22 L19.5 22 L20 27 L12.5 27 Z" fill="#3a3d41"/></g><circle cx="23.5" cy="23.1" r="3.4" fill="#121317"/><circle cx="23.5" cy="23.1" r="2.6" fill="#5aa84d"/>
</svg>
<svg class="ab" style="left:629.0px;top:753.5px" width="58" height="72" viewBox="0 0 58 72">
<path d="M7 0 H36 L57.5 21 V65 C57.5 68.9 54.4 72 50.5 72 H7 C3.1 72 0 68.9 0 65 V7 C0 3.1 3.1 0 7 0 Z" fill="#2f9165"/>
<path d="M36 0 L57.5 21 H42 C38.7 21 36 18.3 36 15 Z" fill="#79ba9c"/>
<path d="M15.5 37 L30.5 57 M30.5 37 L15.5 57" stroke="#ececec" stroke-width="2.6"/>
</svg>
<svg class="ab" style="left:674.8px;top:806.5px" width="31" height="31" viewBox="-2 -2 31 31">
<circle cx="13.5" cy="13.5" r="14.3" fill="#121317"/>
<clipPath id="cdog690822"><circle cx="13.5" cy="13.5" r="13.4"/></clipPath>
<g clip-path="url(#cdog690822)"><rect width="27" height="27" fill="#c9b8a4"/><path d="M0 0 H27 V6 C20 3 12 2 8 6 L0 10 Z" fill="#8b5a2b"/><ellipse cx="16" cy="12.5" rx="7" ry="9" fill="#ece6de"/><ellipse cx="17" cy="9" rx="4.5" ry="4" fill="#f4f0ea"/><circle cx="15" cy="9.5" r="0.9" fill="#5a5a60"/><circle cx="19" cy="9.5" r="0.9" fill="#5a5a60"/><ellipse cx="6" cy="10.5" rx="4.5" ry="4.5" fill="#ddd6ce"/><path d="M2 13 C4 15 8 15 10 13" stroke="#3a3028" stroke-width="1.3" fill="none"/><path d="M0 16 L11 17 L13 27 L0 27 Z" fill="#cf9c84"/><ellipse cx="17" cy="24.5" rx="5.5" ry="3.5" fill="#2f4a42"/><ellipse cx="24.5" cy="15" rx="2.5" ry="6" fill="#cfc6bc"/></g><circle cx="23.5" cy="23.1" r="3.4" fill="#121317"/><circle cx="23.5" cy="23.1" r="2.6" fill="#5aa84d"/>
</svg>
<svg class="ab" style="left:814.7px;top:753.3px" width="58" height="72" viewBox="0 0 58 72">
<path d="M7 0 H35 L57.2 21.5 V64.5 C57.2 68.4 54.1 71.5 50.2 71.5 H7 C3.1 71.5 0 68.4 0 64.5 V7 C0 3.1 3.1 0 7 0 Z" fill="#386dca"/>
<path d="M35 0 L57.2 21.5 H41 C37.7 21.5 35 18.8 35 15.5 Z" fill="#7fa3e2"/>
<g stroke="#e8eefa" stroke-width="2"><path d="M11.8 36 H34.5 M11.8 43.1 H34.5 M11.8 50.4 H34.5 M11.8 57.5 H27.2"/></g>
</svg>
<svg class="ab" style="left:860.2px;top:806.5px" width="31" height="31" viewBox="-2 -2 31 31">
<circle cx="13.5" cy="13.5" r="14.3" fill="#121317"/>
<clipPath id="cmarble875822"><circle cx="13.5" cy="13.5" r="13.4"/></clipPath>
<g clip-path="url(#cmarble875822)"><rect width="27" height="27" fill="#9b9792"/><ellipse cx="15" cy="17.5" rx="9" ry="8" fill="#c7c0b5" filter="url(#blur1)"/><rect width="27" height="27" filter="url(#mbl)"/><rect width="27" height="27" filter="url(#mbd)"/><path d="M7 10.5 C10 9 13 12 16 10 C19 8 22 9.5 24 11" stroke="#55534f" stroke-width="1.6" fill="none" opacity="0.8" filter="url(#blur05)"/></g><circle cx="23.5" cy="23.1" r="3.4" fill="#121317"/><circle cx="23.5" cy="23.1" r="2.6" fill="#5aa84d"/>
</svg>
<svg class="ab" style="left:1000.0px;top:753.3px" width="58" height="72" viewBox="0 0 58 72">
<path d="M7 0 H35 L57.2 21.5 V64.5 C57.2 68.4 54.1 71.5 50.2 71.5 H7 C3.1 71.5 0 68.4 0 64.5 V7 C0 3.1 3.1 0 7 0 Z" fill="#386dca"/>
<path d="M35 0 L57.2 21.5 H41 C37.7 21.5 35 18.8 35 15.5 Z" fill="#7fa3e2"/>
<g stroke="#e8eefa" stroke-width="2"><path d="M11.8 36 H34.5 M11.8 43.1 H34.5 M11.8 50.4 H34.5 M11.8 57.5 H27.2"/></g>
</svg>
<svg class="ab" style="left:1045.5px;top:806.5px" width="31" height="31" viewBox="-2 -2 31 31">
<circle cx="13.5" cy="13.5" r="14.3" fill="#121317"/>
<clipPath id="cmarble1061822"><circle cx="13.5" cy="13.5" r="13.4"/></clipPath>
<g clip-path="url(#cmarble1061822)"><rect width="27" height="27" fill="#9b9792"/><ellipse cx="15" cy="17.5" rx="9" ry="8" fill="#c7c0b5" filter="url(#blur1)"/><rect width="27" height="27" filter="url(#mbl)"/><rect width="27" height="27" filter="url(#mbd)"/><path d="M7 10.5 C10 9 13 12 16 10 C19 8 22 9.5 24 11" stroke="#55534f" stroke-width="1.6" fill="none" opacity="0.8" filter="url(#blur05)"/></g><circle cx="23.5" cy="23.1" r="3.4" fill="#121317"/><circle cx="23.5" cy="23.1" r="2.6" fill="#5aa84d"/>
</svg>
<div class="ab bar" style="left:219.8px;top:483.5px;width:135.2px"></div>
<div class="ab bar" style="left:418.3px;top:483.5px;width:115.7px"></div>
<div class="ab bar" style="left:585.5px;top:483.5px;width:141.5px"></div>
<div class="ab bar" style="left:778.4px;top:483.5px;width:141.3px"></div>
<div class="ab bar" style="left:805.7px;top:510.0px;width:87.6px"></div>
<div class="ab bar" style="left:953.0px;top:483.5px;width:141.0px"></div>
<div class="ab bar" style="left:979.8px;top:510.0px;width:88.2px"></div>
<div class="ab bar" style="left:1322.5px;top:483.5px;width:153.0px"></div>
<div class="ab bar" style="left:1566.0px;top:483.5px;width:41.6px"></div>
<div class="ab bar" style="left:243.8px;top:667.5px;width:88.0px"></div>
<div class="ab bar" style="left:418.3px;top:667.5px;width:115.7px"></div>
<div class="ab bar" style="left:599.0px;top:667.5px;width:115.3px"></div>
<div class="ab bar" style="left:779.0px;top:667.5px;width:128.0px"></div>
<div class="ab bar" style="left:994.0px;top:667.5px;width:74.0px"></div>
<div class="ab bar" style="left:1532.0px;top:667.5px;width:105.0px"></div>
<div class="ab bar" style="left:233.7px;top:851.5px;width:104.7px"></div>
<div class="ab bar" style="left:418.3px;top:851.5px;width:115.7px"></div>
<div class="ab bar" style="left:594.0px;top:851.5px;width:128.3px"></div>
<div class="ab bar" style="left:781.1px;top:851.5px;width:128.5px"></div>
<div class="ab bar" style="left:816.4px;top:878.0px;width:59.5px"></div>
<div class="ab bar" style="left:967.5px;top:851.5px;width:123.5px"></div>
<div class="ab bar" style="left:1001.2px;top:878.0px;width:59.4px"></div>
<div class="ab mt gs" style="left:1449.8px;top:848.7px">n</div>
<div class="ab" style="left:337.2px;top:857.5px;width:1.3px;height:1.5px;background:#555861"></div><div class="ab" style="left:337.6px;top:866.5px;width:1.6px;height:4.5px;background:#8e9198;border-radius:1px"></div>
<div class="ab" style="left:1142px;top:480px;width:313px;height:511.5px;border:1px solid #1f2630;border-radius:5.5px;background:#121317"></div>
<div class="ab" style="left:1170.0px;top:503.2px;line-height:0"><svg width="24" height="21" viewBox="0 0 24 21"><rect x="12.5" y="2" width="9.5" height="7" rx="2" fill="#c38a3e"/><path d="M2.3 0 H10.3 C11.6 0 12 1 12.6 2.3 C13.2 3.8 14 5.6 15.8 5.6 H21.5 C22.8 5.6 23.5 6.6 23.5 7.8 V18.5 C23.5 19.9 22.4 21 21 21 H2.5 C1.1 21 0 19.9 0 18.5 V2.3 C0 1 1 0 2.3 0 Z" fill="#d6a444"/></svg></div>
<div class="ab mt gs" style="left:1207px;top:498.5px">New folder</div>
<div class="ab" style="left:1172.8px;top:568.0px;line-height:0"><svg width="18" height="23" viewBox="0 0 18 23"><path d="M3 0 H11.3 L17.6 6.3 V20 C17.6 21.7 16.3 23 14.6 23 H3 C1.3 23 0 21.7 0 20 V3 C0 1.3 1.3 0 3 0 Z" fill="#0b77b4"/><path d="M11.3 0 L17.6 6.3 H13.3 C12.2 6.3 11.3 5.4 11.3 4.3 Z" fill="#6db4df"/><path d="M3.2 14.3 V16.8 C3.2 18 4 18.7 5.2 18.7 H9 C10.2 18.7 11 18 11 16.8 V14.3" stroke="#a9cdea" stroke-width="0.9" fill="none"/><path d="M7.1 16.5 V11.6 M5.6 13 L7.1 11.4 L8.6 13" stroke="#c9def2" stroke-width="0.9" fill="none"/></svg></div>
<div class="ab mt gs" style="left:1207px;top:564.5px">Upload file</div>
<div class="ab" style="left:1170.0px;top:619.0px;line-height:0"><svg width="24" height="21" viewBox="0 0 24 21"><rect x="12.5" y="2" width="9.5" height="7" rx="2" fill="#c38a3e"/><path d="M2.3 0 H10.3 C11.6 0 12 1 12.6 2.3 C13.2 3.8 14 5.6 15.8 5.6 H21.5 C22.8 5.6 23.5 6.6 23.5 7.8 V18.5 C23.5 19.9 22.4 21 21 21 H2.5 C1.1 21 0 19.9 0 18.5 V2.3 C0 1 1 0 2.3 0 Z" fill="#d6a444"/><circle cx="7.2" cy="14.8" r="3.4" stroke="#f2dcb0" stroke-width="0.9" fill="none"/><path d="M7.2 16 V12 M6 13 L7.2 11.6 L8.4 13" stroke="#f2dcb0" stroke-width="0.8" fill="none"/></svg></div>
<div class="ab mt gs" style="left:1207px;top:614.5px">Upload folder</div>
<div class="ab" style="left:1172.8px;top:683.8px;line-height:0"><svg width="18" height="23" viewBox="0 0 18 23"><path d="M3 0 H11.3 L17.6 6.3 V20 C17.6 21.7 16.3 23 14.6 23 H3 C1.3 23 0 21.7 0 20 V3 C0 1.3 1.3 0 3 0 Z" fill="#3a6fcc"/><path d="M11.3 0 L17.6 6.3 H13.3 C12.2 6.3 11.3 5.4 11.3 4.3 Z" fill="#86a7e3"/><path d="M3.4 11.2 H10 M3.4 13.4 H10 M3.4 15.6 H10 M3.4 17.8 H8" stroke="#a8c0ec" stroke-width="0.9"/></svg></div>
<div class="ab mt gs" style="left:1207px;top:680.5px">Text</div>
<div class="ab" style="left:1172.8px;top:734.0px;line-height:0"><svg width="18" height="23" viewBox="0 0 18 23"><path d="M3 0 H11.3 L17.6 6.3 V20 C17.6 21.7 16.3 23 14.6 23 H3 C1.3 23 0 21.7 0 20 V3 C0 1.3 1.3 0 3 0 Z" fill="#4a4d53"/><path d="M11.3 0 L17.6 6.3 H13.3 C12.2 6.3 11.3 5.4 11.3 4.3 Z" fill="#8d9097"/><path d="M4.2 9.5 V16.5 H10.5" stroke="#e6e6e6" stroke-width="1" fill="none"/><path d="M5.5 13.3 H11.5 M7 15 H11.5" stroke="#b8b8b8" stroke-width="0.9"/></svg></div>
<div class="ab mt gs" style="left:1207px;top:730.5px">Chart</div>
<div class="ab" style="left:1172.8px;top:783.8px;line-height:0"><svg width="18" height="23" viewBox="0 0 18 23"><path d="M3 0 H11.3 L17.6 6.3 V20 C17.6 21.7 16.3 23 14.6 23 H3 C1.3 23 0 21.7 0 20 V3 C0 1.3 1.3 0 3 0 Z" fill="#6a4fae"/><path d="M11.3 0 L17.6 6.3 H13.3 C12.2 6.3 11.3 5.4 11.3 4.3 Z" fill="#9e89d2"/><g fill="#e6e0f5"><circle cx="5.2" cy="10.8" r="1"/><circle cx="8.3" cy="10.6" r="1"/><circle cx="11" cy="13.5" r="1"/><circle cx="5" cy="16" r="1"/><circle cx="8.5" cy="16" r="1"/></g><path d="M5.2 10.8 L8 13.5 L8.3 10.6 M11 13.5 L8 13.5 L5 16 M8 13.5 L8.5 16" stroke="#d8d0f0" stroke-width="0.6"/></svg></div>
<div class="ab mt gs" style="left:1207px;top:780.5px">Mind map</div>
<div class="ab" style="left:1172.8px;top:849.8px;line-height:0"><svg width="18" height="23" viewBox="0 0 18 23"><path d="M3 0 H11.3 L17.6 6.3 V20 C17.6 21.7 16.3 23 14.6 23 H3 C1.3 23 0 21.7 0 20 V3 C0 1.3 1.3 0 3 0 Z" fill="#3a86bf"/><path d="M11.3 0 L17.6 6.3 H13.3 C12.2 6.3 11.3 5.4 11.3 4.3 Z" fill="#8fb0e3"/><path d="M3.4 12.3 L5.2 17.3 L7 13.3 L8.8 17.3 L10.6 12.3" stroke="#eef2fa" stroke-width="1" fill="none"/></svg></div>
<div class="ab mt gs" style="left:1207px;top:846.5px">Word document</div>
<div class="ab" style="left:1172.8px;top:899.8px;line-height:0"><svg width="18" height="23" viewBox="0 0 18 23"><path d="M3 0 H11.3 L17.6 6.3 V20 C17.6 21.7 16.3 23 14.6 23 H3 C1.3 23 0 21.7 0 20 V3 C0 1.3 1.3 0 3 0 Z" fill="#33926b"/><path d="M11.3 0 L17.6 6.3 H13.3 C12.2 6.3 11.3 5.4 11.3 4.3 Z" fill="#84c4a4"/><path d="M4.5 12.3 L9 17.3 M9 12.3 L4.5 17.3" stroke="#dcefe6" stroke-width="1.1"/></svg></div>
<div class="ab mt gs" style="left:1207px;top:896.5px">Excel worksheet</div>
<div class="ab" style="left:1172.8px;top:949.7px;line-height:0"><svg width="18" height="23" viewBox="0 0 18 23"><path d="M3 0 H11.3 L17.6 6.3 V20 C17.6 21.7 16.3 23 14.6 23 H3 C1.3 23 0 21.7 0 20 V3 C0 1.3 1.3 0 3 0 Z" fill="#c47a62"/><path d="M11.3 0 L17.6 6.3 H13.3 C12.2 6.3 11.3 5.4 11.3 4.3 Z" fill="#d9a9a6"/><path d="M5.3 17.6 V11.8 H7.6 C8.9 11.8 9.6 12.6 9.6 13.6 C9.6 14.7 8.9 15.4 7.6 15.4 H5.3" stroke="#f3e6dc" stroke-width="1" fill="none"/></svg></div>
<div class="ab mt gs" style="left:1207px;top:946.5px">Powerpoint presentation</div>
<div class="ab" style="left:1143px;top:546.0px;width:313px;height:1px;background:#262a30"></div>
<div class="ab" style="left:1143px;top:661.8px;width:313px;height:1px;background:#262a30"></div>
<div class="ab" style="left:1143px;top:827.5px;width:313px;height:1px;background:#262a30"></div>
<svg class="ab" style="left:0;top:0" width="1872" height="1200" viewBox="0 0 1872 1200"><path d="M1552 946.3 L1716.4 1012.3 L1651.3 1041.7 L1617.2 1110.8 Z" fill="#ffffff"/><path d="M1562.9 956.8 L1701.2 1012.3 L1647.8 1037.3 L1618 1095 Z" fill="#5aa539"/></svg>
</body></html>
